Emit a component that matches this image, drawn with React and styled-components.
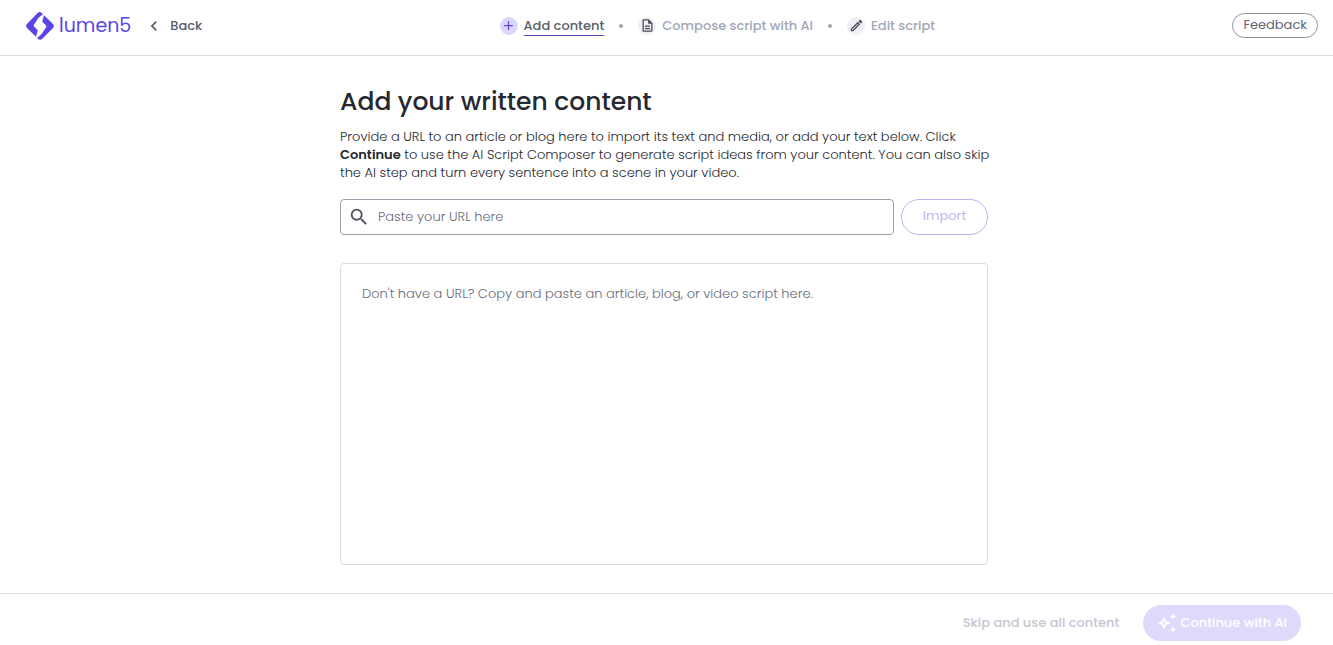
import React from "react";
import styled, { createGlobalStyle } from "styled-components";
import { MdAdd, MdChevronLeft, MdOutlineDescription, MdOutlineModeEdit, MdSearch } from "react-icons/md";

const GlobalStyle = createGlobalStyle`
  *, *::before, *::after { box-sizing: border-box; }
  body {
    margin: 0;
    background: #fff;
    color: #25282f;
    font: 300 13px/18px Poppins, Inter, "Open Sans", sans-serif;
  }
  button, input, textarea { font: inherit; }
  h1, p, ol { margin: 0; padding: 0; }
`;

const Page = styled.div`
  display: flex;
  flex-direction: column;
  min-height: 100vh;
`;

const TopBar = styled.header`
  display: flex;
  align-items: center;
  justify-content: space-between;
  height: 56px;
  padding: 0 15px 4px 26px;
  border-bottom: 1px solid #dcdce0;
`;

const Brand = styled.div`
  display: flex;
  align-items: center;
  gap: 13px;
`;

const LogoLink = styled.a`
  display: flex;
  align-items: center;
  gap: 5px;
  color: #5b45e8;
  font-size: 19px;
  font-weight: 400;
  line-height: 28px;
  text-decoration: none;
`;

const BackButton = styled.button`
  display: flex;
  align-items: center;
  gap: 6px;
  padding: 0;
  border: 0;
  background: none;
  color: #5a5d6a;
  font-weight: 500;
  cursor: pointer;
`;

const Steps = styled.ol`
  display: flex;
  align-items: center;
  list-style: none;
`;

const Step = styled.li`
  display: flex;
  align-items: center;

  & + &::before {
    content: "";
    width: 4px;
    height: 4px;
    margin: 0 15px;
    border-radius: 50%;
    background: #a3a5b5;
  }
`;

const StepIcon = styled.span`
  display: grid;
  place-items: center;
  width: 18px;
  height: 18px;
  margin-right: 6px;
  border-radius: 50%;
  background: ${(p) => (p.$active ? "#dcd6fb" : "#efeff5")};
  color: ${(p) => (p.$active ? "#5b45e8" : "#464854")};
`;

const StepLink = styled.a`
  padding-top: 2px;
  border-bottom: 1px solid ${(p) => (p.$active ? "#5b3fb0" : "transparent")};
  color: ${(p) => (p.$active ? "#5a5d6a" : "#a0a7b8")};
  font-weight: 500;
  line-height: 18px;
  text-decoration: none;
`;

const FeedbackButton = styled.button`
  height: 25px;
  padding: 0 10px 2px;
  border: 1px solid #9194a3;
  border-radius: 13px;
  background: #fff;
  color: #606574;
  font-weight: 400;
  line-height: 20px;
  cursor: pointer;
`;

const Main = styled.main`
  display: flex;
  flex: 1;
  flex-direction: column;
  width: 100%;
  max-width: 685px;
  margin: 0 auto;
  padding: 28px 21px 28px 16px;
`;

const Title = styled.h1`
  font-size: 25px;
  font-weight: 500;
  line-height: 36px;
`;

const Intro = styled.p`
  margin: 8px -10px 0 0;
  color: #25282f;
  line-height: 18px;

  strong { font-weight: 600; }
`;

const ImportRow = styled.form`
  display: flex;
  gap: 7px;
  margin: 17px 0 28px;
`;

const UrlField = styled.label`
  display: flex;
  flex: 1;
  align-items: center;
  gap: 8px;
  height: 36px;
  padding: 0 7px;
  border: 1px solid #9a9fae;
  border-radius: 4px;
  color: #50525e;
`;

const UrlInput = styled.input`
  flex: 1;
  min-width: 0;
  padding: 0;
  border: 0;
  outline: 0;
  background: none;
  color: #25282f;

  &::placeholder { color: #666b7c; opacity: 1; }
`;

const ImportButton = styled.button`
  width: 87px;
  height: 36px;
  padding: 0 0 2px;
  border: 1px solid #bcb2f0;
  border-radius: 18px;
  background: #fff;
  color: #beb5f1;
  font-weight: 400;
`;

const ScriptBox = styled.textarea`
  display: block;
  flex: 1;
  min-height: 200px;
  padding: 21px;
  border: 1px solid #dcdce2;
  border-radius: 4px;
  outline: 0;
  resize: none;
  color: #25282f;

  &::placeholder { color: #666b7c; opacity: 1; }
`;

const Footer = styled.footer`
  display: flex;
  align-items: center;
  justify-content: flex-end;
  gap: 24px;
  padding: 11px 32px 4px;
  border-top: 1px solid #dcdce0;
`;

const SkipButton = styled.button`
  padding: 0;
  border: 0;
  background: none;
  color: #c6c6d2;
  font-weight: 500;
`;

const ContinueButton = styled.button`
  display: flex;
  align-items: center;
  gap: 3px;
  height: 36px;
  padding: 0 14px;
  border: 0;
  border-radius: 18px;
  background: #dedafb;
  color: #fff;
  font-weight: 500;
`;

const LogoMark = () => (
  <svg width="28" height="28" viewBox="0 0 28 28" fill="currentColor" aria-hidden="true">
    <path d="M11.6 1 Q13.7-.8 15.6.8 L17 2.2 Q13.8 4.2 12.4 6 L8.2 12.2 Q7.2 13.8 8.4 15 L11.8 18.2 10 24.8 1 16 Q-.8 14 1 12Z" />
    <path d="M18 3.2 27 12 Q28.6 14 27 16 L16 27 Q14 28.6 12.2 27 L11 25.8 Q14.2 23.8 15.6 22 L19.8 15.8 Q20.8 14.2 19.6 13 L16.2 9.8Z" />
  </svg>
);

const Sparkles = () => (
  <svg width="20" height="20" viewBox="0 0 20 20" fill="currentColor" aria-hidden="true">
    <path fillRule="evenodd" d="M7 3.5 9 8 13.5 10 9 12 7 16.5 5 12 .5 10 5 8Z M7 7.8 6.3 9.3 4.8 10 6.3 10.7 7 12.2 7.7 10.7 9.2 10 7.7 9.3Z" />
    <path d="M16 .2 17 2.5 19.3 3.5 17 4.5 16 6.8 15 4.5 12.7 3.5 15 2.5Z M16 13.2 17 15.5 19.3 16.5 17 17.5 16 19.8 15 17.5 12.7 16.5 15 15.5Z" />
  </svg>
);

const steps = [
  { label: "Add content", Icon: MdAdd, active: true },
  { label: "Compose script with AI", Icon: MdOutlineDescription },
  { label: "Edit script", Icon: MdOutlineModeEdit },
];

export default function App() {
  return (
    <Page>
      <GlobalStyle />
      <TopBar>
        <Brand>
          <LogoLink href="#home"><LogoMark />lumen5</LogoLink>
          <BackButton type="button"><MdChevronLeft size={20} />Back</BackButton>
        </Brand>
        <nav aria-label="Progress">
          <Steps>
            {steps.map(({ label, Icon, active }) => (
              <Step key={label}>
                <StepIcon $active={active}><Icon size={15} /></StepIcon>
                <StepLink href="#step" $active={active} aria-current={active ? "step" : undefined}>{label}</StepLink>
              </Step>
            ))}
          </Steps>
        </nav>
        <FeedbackButton type="button">Feedback</FeedbackButton>
      </TopBar>
      <Main>
        <Title>Add your written content</Title>
        <Intro>
          Provide a URL to an article or blog here to import its text and media, or add your text below. Click{" "}
          <strong>Continue</strong> to use the AI Script Composer to generate script ideas from your content. You can
          also skip the AI step and turn every sentence into a scene in your video.
        </Intro>
        <ImportRow>
          <UrlField>
            <MdSearch size={22} aria-hidden="true" />
            <UrlInput type="url" placeholder="Paste your URL here" aria-label="Article URL" />
          </UrlField>
          <ImportButton type="button" disabled>Import</ImportButton>
        </ImportRow>
        <ScriptBox
          aria-label="Script text"
          placeholder="Don't have a URL? Copy and paste an article, blog, or video script here."
        />
      </Main>
      <Footer>
        <SkipButton type="button" disabled>Skip and use all content</SkipButton>
        <ContinueButton type="button" disabled><Sparkles />Continue with AI</ContinueButton>
      </Footer>
    </Page>
  );
}
